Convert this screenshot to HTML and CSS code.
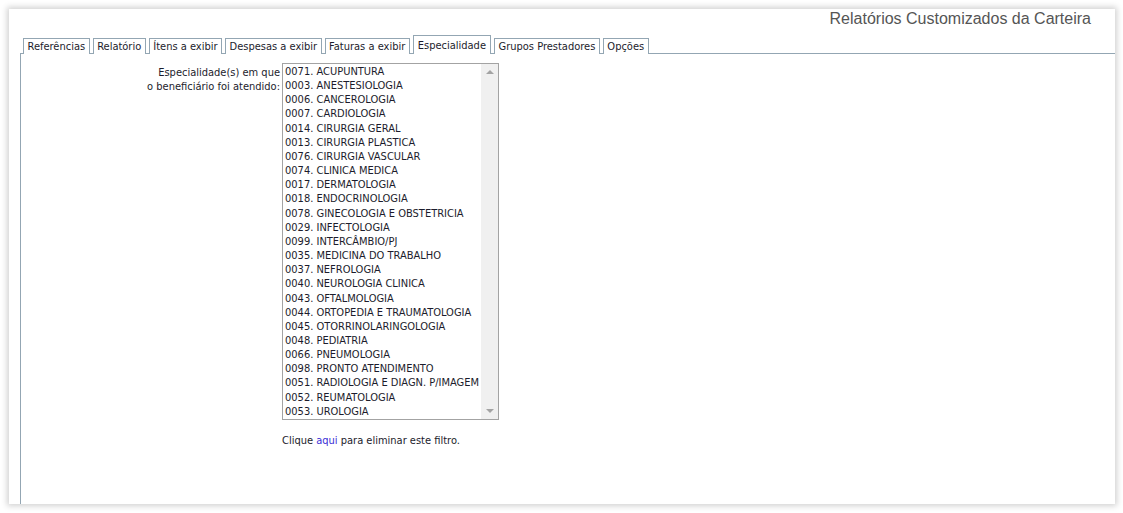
FILE: index.html
```html
<!DOCTYPE html>
<html lang="pt-BR">
<head>
<meta charset="utf-8">
<title>Relatórios Customizados da Carteira</title>
<link rel="stylesheet" href="styles.css">
</head>
<body>
<div class="sheet">
  <div class="title">Relatórios Customizados da Carteira</div>
  <div class="tabs">
    <span class="tab">Referências</span>
    <span class="tab">Relatório</span>
    <span class="tab">Ítens a exibir</span>
    <span class="tab">Despesas a exibir</span>
    <span class="tab">Faturas a exibir</span>
    <span class="tab active">Especialidade</span>
    <span class="tab">Grupos Prestadores</span>
    <span class="tab">Opções</span>
  </div>
  <div class="panel">
    <div class="field">
      <div class="label">Especialidade(s) em que<br>o beneficiário foi atendido:</div>
      <div class="control">
        <div class="listbox">
          <div class="items">
            <div class="item">0071. ACUPUNTURA</div>
            <div class="item">0003. ANESTESIOLOGIA</div>
            <div class="item">0006. CANCEROLOGIA</div>
            <div class="item">0007. CARDIOLOGIA</div>
            <div class="item">0014. CIRURGIA GERAL</div>
            <div class="item">0013. CIRURGIA PLASTICA</div>
            <div class="item">0076. CIRURGIA VASCULAR</div>
            <div class="item">0074. CLINICA MEDICA</div>
            <div class="item">0017. DERMATOLOGIA</div>
            <div class="item">0018. ENDOCRINOLOGIA</div>
            <div class="item">0078. GINECOLOGIA E OBSTETRICIA</div>
            <div class="item">0029. INFECTOLOGIA</div>
            <div class="item">0099. INTERCÂMBIO/PJ</div>
            <div class="item">0035. MEDICINA DO TRABALHO</div>
            <div class="item">0037. NEFROLOGIA</div>
            <div class="item">0040. NEUROLOGIA CLINICA</div>
            <div class="item">0043. OFTALMOLOGIA</div>
            <div class="item">0044. ORTOPEDIA E TRAUMATOLOGIA</div>
            <div class="item">0045. OTORRINOLARINGOLOGIA</div>
            <div class="item">0048. PEDIATRIA</div>
            <div class="item">0066. PNEUMOLOGIA</div>
            <div class="item">0098. PRONTO ATENDIMENTO</div>
            <div class="item">0051. RADIOLOGIA E DIAGN. P/IMAGEM</div>
            <div class="item">0052. REUMATOLOGIA</div>
            <div class="item">0053. UROLOGIA</div>
          </div>
          <div class="scrollbar">
            <span class="arrow up"></span>
            <span class="arrow down"></span>
          </div>
        </div>
        <p class="hint">Clique <a href="#" class="link">aqui</a> para eliminar este filtro.</p>
      </div>
    </div>
  </div>
</div>
</body>
</html>
```

FILE: styles.css
```css
html, body {
  margin: 0;
  padding: 0;
  background: #ffffff;
}
body {
  padding: 9px 8px 9px 9px;
  font-family: "DejaVu Sans Condensed", "DejaVu Sans", sans-serif;
  font-size: 11px;
  color: #1c1c2c;
}
.sheet {
  width: 1106px;
  height: 495px;
  background: #fff;
  box-shadow: 0 0 6px 2px rgba(0,0,0,0.18);
  display: flex;
  flex-direction: column;
  overflow: hidden;
}
.title {
  font-family: "Liberation Sans", Arial, sans-serif;
  font-size: 16px;
  color: #555;
  text-align: right;
  padding: 1px 24px 0 0;
  height: 25px;
  line-height: 18px;
}
.tabs {
  display: flex;
  align-items: flex-end;
  padding-left: 14px;
  gap: 3px;
  height: 19px;
  position: relative;
  z-index: 1;
}
.tab {
  border: 1px solid #93a6b3;
  border-bottom: none;
  height: 16px;
  line-height: 15px;
  padding: 0 3.5px;
  background: #fff;
  box-sizing: border-box;
  white-space: nowrap;
}
.tab.active {
  height: 19px;
  line-height: 19px;
  padding: 0 4px;
}
.panel {
  flex: 1;
  margin-left: 11px;
  border-top: 1px solid #93a6b3;
  border-left: 1px solid #93a6b3;
  margin-top: -1px;
  padding-top: 9px;
}
.field {
  display: flex;
  gap: 2px;
}
.label {
  width: 259px;
  text-align: right;
  line-height: 14px;
  padding-top: 3px;
}
.listbox {
  width: 215px;
  height: 355px;
  border: 1px solid #a3a3a3;
  display: flex;
}
.items {
  flex: 1;
  padding: 1px 0 0 2px;
}
.item {
  height: 14.17px;
  line-height: 14px;
  white-space: nowrap;
}
.scrollbar {
  width: 17px;
  background: #f0f0f0;
  display: flex;
  flex-direction: column;
  justify-content: space-between;
  align-items: center;
  padding: 6px 0;
  box-sizing: border-box;
}
.arrow {
  width: 0;
  height: 0;
  border-left: 4px solid transparent;
  border-right: 4px solid transparent;
}
.arrow.up { border-bottom: 4px solid #a3a3a3; }
.arrow.down { border-top: 4px solid #a3a3a3; }
.hint {
  margin: 14px 0 0 0;
}
.link {
  color: #3b2fd6;
  text-decoration: none;
}
```
